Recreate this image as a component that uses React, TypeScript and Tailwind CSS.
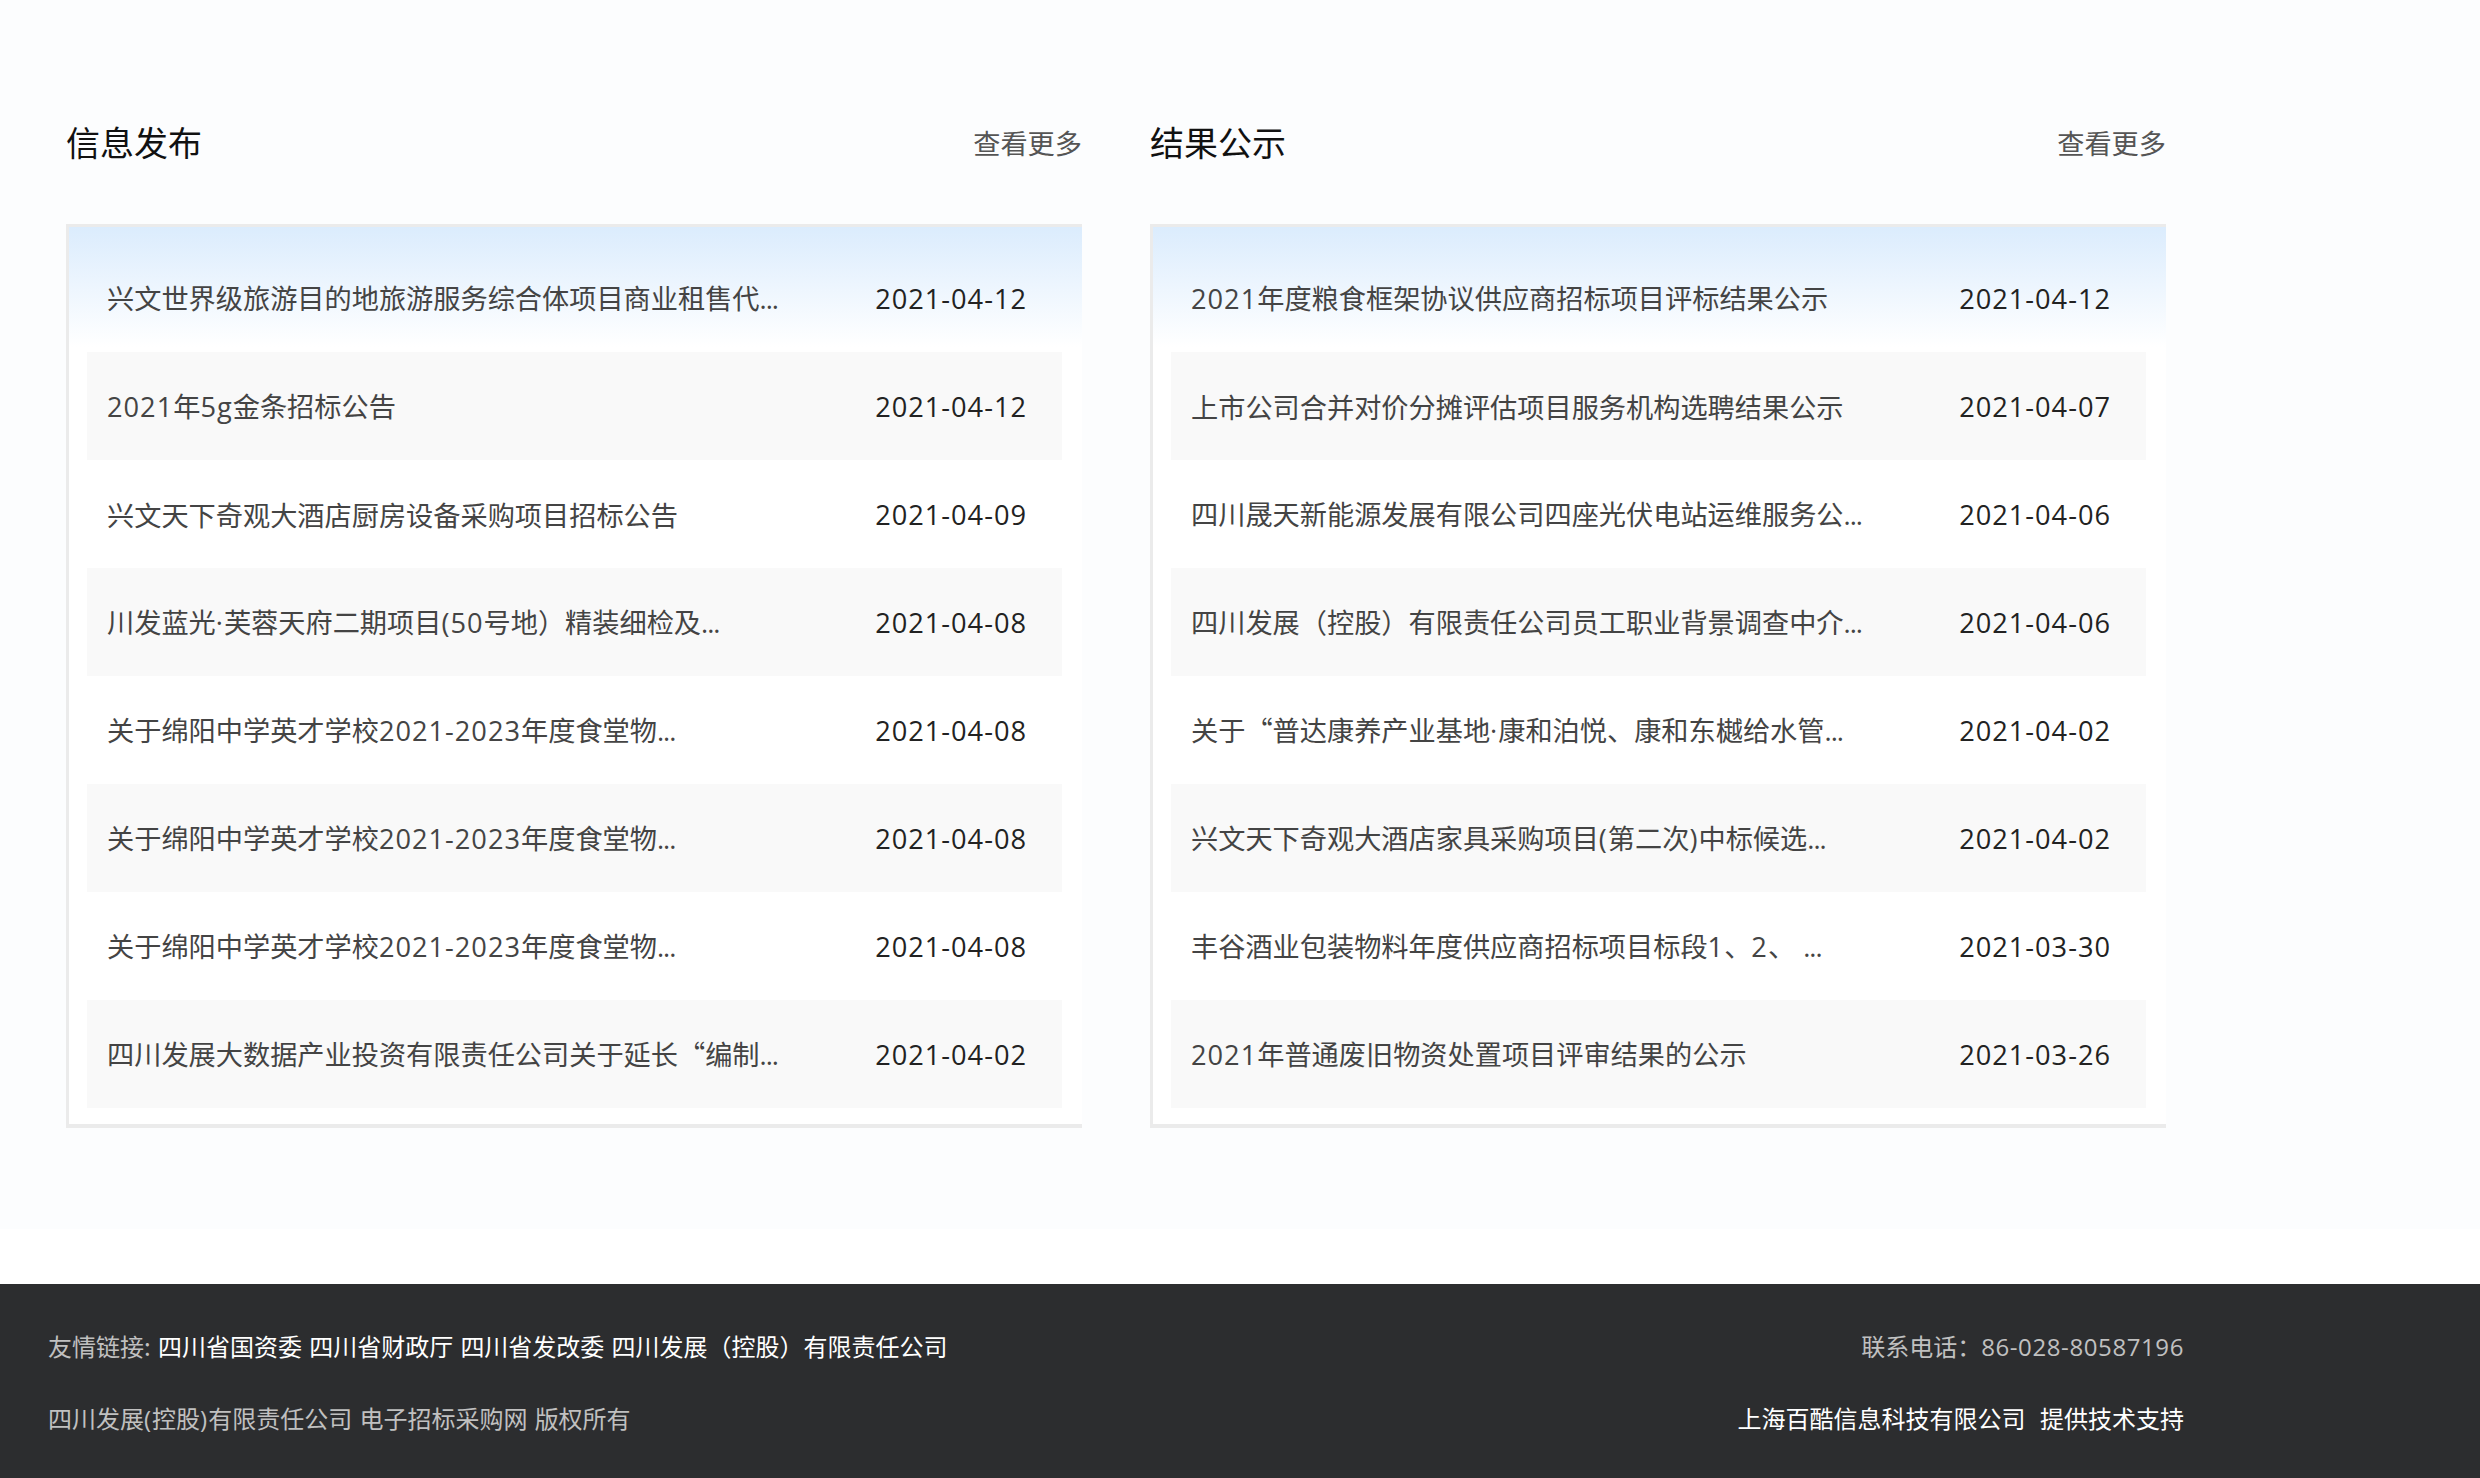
const left = [
  ['兴文世界级旅游目的地旅游服务综合体项目商业租售代...', '2021-04-12'],
  ['2021年5g金条招标公告', '2021-04-12'],
  ['兴文天下奇观大酒店厨房设备采购项目招标公告', '2021-04-09'],
  ['川发蓝光·芙蓉天府二期项目(50号地）精装细检及...', '2021-04-08'],
  ['关于绵阳中学英才学校2021-2023年度食堂物...', '2021-04-08'],
  ['关于绵阳中学英才学校2021-2023年度食堂物...', '2021-04-08'],
  ['关于绵阳中学英才学校2021-2023年度食堂物...', '2021-04-08'],
  ['四川发展大数据产业投资有限责任公司关于延长“编制...', '2021-04-02'],
];

const right = [
  ['2021年度粮食框架协议供应商招标项目评标结果公示', '2021-04-12'],
  ['上市公司合并对价分摊评估项目服务机构选聘结果公示', '2021-04-07'],
  ['四川晟天新能源发展有限公司四座光伏电站运维服务公...', '2021-04-06'],
  ['四川发展（控股）有限责任公司员工职业背景调查中介...', '2021-04-06'],
  ['关于“普达康养产业基地·康和泊悦、康和东樾给水管...', '2021-04-02'],
  ['兴文天下奇观大酒店家具采购项目(第二次)中标候选...', '2021-04-02'],
  ['丰谷酒业包装物料年度供应商招标项目标段1、2、 ...', '2021-03-30'],
  ['2021年普通废旧物资处置项目评审结果的公示', '2021-03-26'],
];

// latin runs are set wider than the CJK font's own digits
function Mixed({ text, tight }: { text: string; tight?: boolean }) {
  return (
    <>
      {text.split(/([0-9A-Za-z·() -]+|\.\.\.)/).map((part, i) => {
        if (i % 2 === 0) return part;
        if (part === '...') {
          return (
            <span key={i} className="font-['Open_Sans'] tracking-[-1px]">
              {part}
            </span>
          );
        }
        return (
          <span key={i} className={tight ? "font-['Open_Sans'] tracking-[0.6px]" : "font-['Open_Sans'] tracking-[1px]"}>
            {part}
          </span>
        );
      })}
    </>
  );
}

function Panel({ title, rows }: { title: string; rows: string[][] }) {
  return (
    <section className="w-[1016px]">
      <div className="flex h-[86px] items-center justify-between">
        <h2 className="pb-[3px] text-[34px] text-[#111]">{title}</h2>
        <a className="pb-[2px] text-[27.2px] text-[#555]">查看更多</a>
      </div>
      <div className="mt-[38px] border-b-4 border-l-[3px] border-t-[3px] border-[#ebebeb] bg-[linear-gradient(180deg,#dbecfd_0,#fff_120px)] pb-[16px] pl-[18px] pr-[20px] pt-[17px]">
        {rows.map(([name, date], i) => (
          <div
            key={i}
            className={`flex h-[108px] items-center justify-between pl-[20px] pr-[35px] ${i % 2 === 1 ? 'bg-[#f9f9f9]' : ''}`}
          >
            <span className="whitespace-pre text-[27.2px] text-[#444]">
              <Mixed text={name} />
            </span>
            <span className="text-[27.2px] text-[#222]">
              <Mixed text={date} />
            </span>
          </div>
        ))}
      </div>
    </section>
  );
}

export default function App() {
  return (
    <div className="flex min-h-screen flex-col bg-white font-['Noto_Sans_CJK_SC','Noto_Sans',sans-serif]">
      <main className="h-[1229px] bg-[#fcfdfe] pl-[66px] pt-[100px]">
        <div className="flex gap-[68px]">
          <Panel title="信息发布" rows={left} />
          <Panel title="结果公示" rows={right} />
        </div>
      </main>
      <footer className="mt-[55px] h-[194px] bg-[#2c2d2f] pl-[48px] pt-[26px] text-[24px]">
        <div className="flex w-[2136px] flex-col">
          <div className="flex h-[72px] items-center justify-between">
            <p className="text-[#c0c0c0]">
              <Mixed text="友情链接: " />
              <span className="text-white">
                <Mixed text="四川省国资委 四川省财政厅 四川省发改委 四川发展（控股）有限责任公司" />
              </span>
            </p>
            <p className="text-[#c0c0c0]">
              <Mixed text="联系电话：86-028-80587196" tight />
            </p>
          </div>
          <div className="flex h-[72px] items-center justify-between">
            <p className="text-[#c0c0c0]">
              <Mixed text="四川发展(控股)有限责任公司 电子招标采购网 版权所有" />
            </p>
            <p className="whitespace-pre text-white">
              <Mixed text="上海百酷信息科技有限公司  提供技术支持" />
            </p>
          </div>
        </div>
      </footer>
    </div>
  );
}
